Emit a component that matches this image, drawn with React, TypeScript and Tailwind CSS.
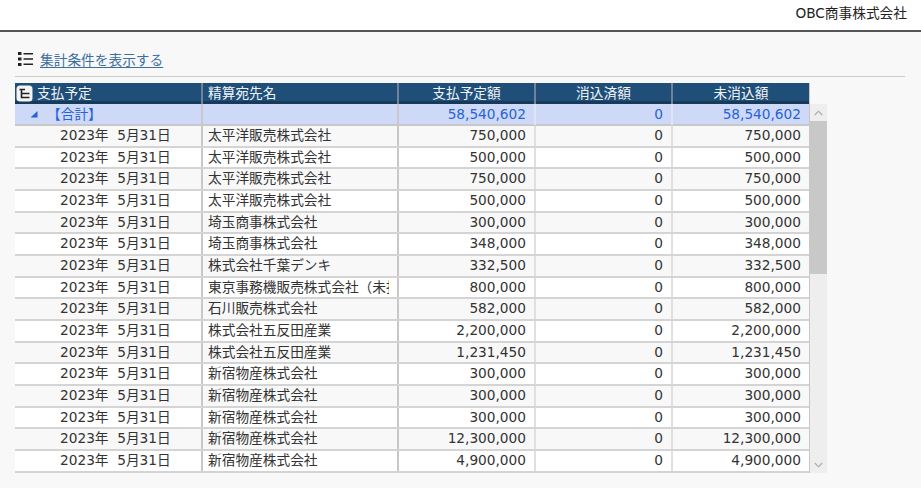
const font = "[font-family:'DejaVu_Sans','Noto_Sans_CJK_JP',sans-serif]";

const rows: [string, string][] = [
  ["太平洋販売株式会社", "750,000"],
  ["太平洋販売株式会社", "500,000"],
  ["太平洋販売株式会社", "750,000"],
  ["太平洋販売株式会社", "500,000"],
  ["埼玉商事株式会社", "300,000"],
  ["埼玉商事株式会社", "348,000"],
  ["株式会社千葉デンキ", "332,500"],
  ["東京事務機販売株式会社（未払）", "800,000"],
  ["石川販売株式会社", "582,000"],
  ["株式会社五反田産業", "2,200,000"],
  ["株式会社五反田産業", "1,231,450"],
  ["新宿物産株式会社", "300,000"],
  ["新宿物産株式会社", "300,000"],
  ["新宿物産株式会社", "300,000"],
  ["新宿物産株式会社", "12,300,000"],
  ["新宿物産株式会社", "4,900,000"],
];

const gridCols = "grid grid-cols-[188px_196px_137px_137px_136px]";

const TreeIcon = () => (
  <svg width="17" height="17" viewBox="0 0 17 17" className="shrink-0">
    <rect x="0.5" y="0.5" width="16" height="16" rx="3.5" fill="#f4f4f4" />
    <path d="M3.5 4.5H9M5.5 4.5V12.5H13.5M5.5 8.5H13.5" stroke="#222" strokeWidth="1.6" fill="none" />
  </svg>
);

const ListIcon = () => (
  <svg width="15" height="14" viewBox="0 0 15 14" className="shrink-0">
    <path d="M0 0h3.5v3H0zM0 5.5h3.5v3H0zM0 11h3.5v3H0z" fill="#222" />
    <path d="M5.5 1h9.5v1.6H5.5zM5.5 6.2h9.5v1.6H5.5zM5.5 11.4h9.5v1.6H5.5z" fill="#222" />
  </svg>
);

const Chevron = ({ up }: { up?: boolean }) => (
  <svg width="9" height="6" viewBox="0 0 9 6">
    <path d={up ? "M0.8 5L4.5 1.2L8.2 5" : "M0.8 1L4.5 4.8L8.2 1"} stroke="#a8a8a8" strokeWidth="1.1" fill="none" />
  </svg>
);

const HeaderCell = ({ label, last }: { label: string; last?: boolean }) => (
  <div className={`flex items-center justify-center ${last ? "" : "border-r-2 border-r-[#6f8499]"}`}>
    {label}
  </div>
);

const App = () => {
  return (
    <div className={`h-[488px] w-[921px] overflow-hidden bg-[#f8f8f8] text-[13.7px] text-[#333] ${font}`}>
      <header className="flex h-[32px] items-start justify-end border-b-2 border-[#555] bg-white pr-[14px] pt-[3px] text-[#222]">
        OBC商事株式会社
      </header>

      <div className="ml-[15px] mr-[16px] mt-[20px] flex h-[25px] items-start gap-[7px] border-b border-[#ccc] pl-[3px]">
        <ListIcon />
        <a className="-mt-[1px] leading-[19px] text-[#3c6f9f] underline underline-offset-2">集計条件を表示する</a>
      </div>

      <div className="ml-[15px] mt-[6px] flex items-stretch">
        <div className="w-[795px] border-r border-[#c8c8c8]">
          <div className={`${gridCols} h-[21px] border-b-[3px] border-b-[#17395a] bg-[#1f4e79] text-[#f0f4f8]`}>
            <div className="flex items-center gap-[4px] overflow-hidden border-r-2 border-r-[#6f8499] pl-[1px]">
              <TreeIcon />
              支払予定
            </div>
            <div className="flex items-center border-r-2 border-r-[#6f8499] pl-[5px]">精算宛先名</div>
            <HeaderCell label="支払予定額" />
            <HeaderCell label="消込済額" />
            <HeaderCell label="未消込額" last />
          </div>

          <div className={`${gridCols} h-[22px] border-b-2 border-[#c8c8c8] bg-[#ced9f7] text-[#2563d8]`}>
            <div className="flex items-center border-r-2 border-[#c8c8c8] pl-[15px]">
              <svg width="8" height="7" viewBox="0 0 8 7" className="shrink-0">
                <path d="M7.5 0V6.5H0.5Z" fill="#2563d8" />
              </svg>
              <span className="ml-[9px]">【合計】</span>
            </div>
            <div className="border-r-2 border-[#c8c8c8]" />
            <div className="flex items-center justify-end border-r-2 border-[#dfe4f2] pr-[8px]">58,540,602</div>
            <div className="flex items-center justify-end border-r-2 border-[#dfe4f2] pr-[8px]">0</div>
            <div className="flex items-center justify-end pr-[8px]">58,540,602</div>
          </div>

          {rows.map(([name, amount], i) => (
            <div
              key={i}
              className={`${gridCols} h-[21.67px] border-b-2 border-[#d4d4d4] leading-[18px] ${i % 2 === 0 ? "bg-[#f8f8f8]" : "bg-white"}`}
            >
              <div className="whitespace-pre border-r-2 border-[#c8c8c8] pl-[45px]">2023年  5月31日</div>
              <div className="border-r-2 border-[#c8c8c8] pl-[5px] pr-[8px]">
                <div className="overflow-hidden whitespace-nowrap">{name}</div>
              </div>
              <div className="border-r-2 border-[#e0e0e0] pr-[8px] text-right">{amount}</div>
              <div className="border-r-2 border-[#e0e0e0] pr-[8px] text-right">0</div>
              <div className="pr-[8px] text-right">{amount}</div>
            </div>
          ))}
        </div>

        <div className="mt-[21px] flex w-[17px] flex-col bg-[#eeeeee]">
          <div className="flex h-[17px] shrink-0 items-center justify-center"><Chevron up /></div>
          <div className="h-[153px] shrink-0 bg-[#c8c8c8]" />
          <div className="flex flex-1 items-end justify-center pb-[5px]"><Chevron /></div>
        </div>
      </div>
    </div>
  );
};

export default App;
